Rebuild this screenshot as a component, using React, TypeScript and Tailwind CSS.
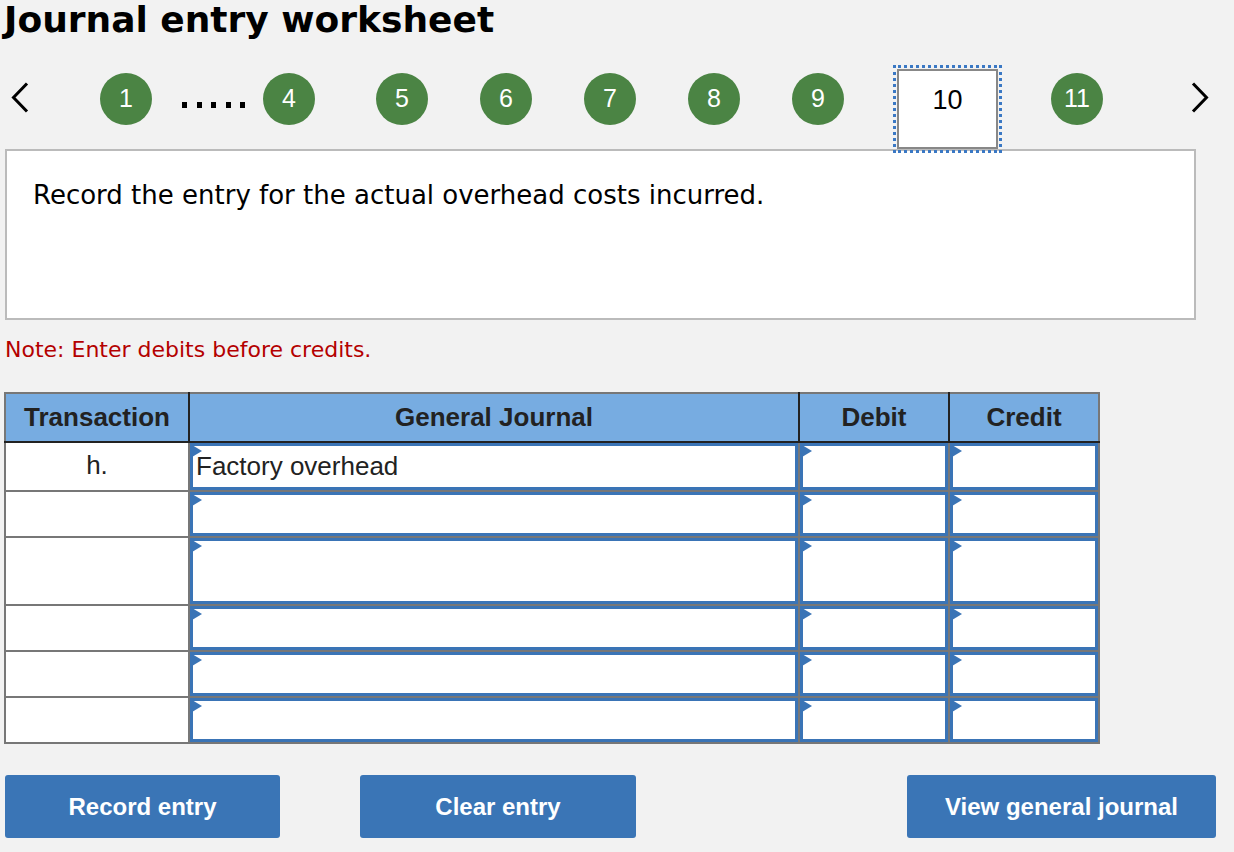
import React from "react";

const STEPS = [
  { n: "4", x: 263 },
  { n: "5", x: 376 },
  { n: "6", x: 480 },
  { n: "7", x: 584 },
  { n: "8", x: 688 },
  { n: "9", x: 792 },
];

const ROWS = [
  { h: "h-[49px]", tx: "h.", acct: "Factory overhead" },
  { h: "h-[46px]", tx: "", acct: "" },
  { h: "h-[68px]", tx: "", acct: "" },
  { h: "h-[46px]", tx: "", acct: "" },
  { h: "h-[46px]", tx: "", acct: "" },
  { h: "h-[46px]", tx: "", acct: "" },
];

function Step({ n }: { n: string }) {
  return (
    <span className="flex h-[52px] w-[52px] shrink-0 items-center justify-center rounded-full bg-[#4b8444] font-['Liberation_Sans',Arial,sans-serif] text-[25px] text-white">
      {n}
    </span>
  );
}

function Cell({ children }: { children?: React.ReactNode }) {
  return (
    <div className="relative h-full border-[3px] border-[#3a74b6] bg-white">
      <span className="absolute -left-[1px] -top-[1px] h-0 w-0 border-y-[6px] border-l-[10px] border-y-transparent border-l-[#3a74b6]" />
      {children && (
        <span className="absolute left-[3px] top-[6px] font-['Liberation_Sans',Arial,sans-serif] text-[26px] leading-[28px] text-[#222]">
          {children}
        </span>
      )}
    </div>
  );
}

function Button({ label, w }: { label: string; w: string }) {
  return (
    <button
      className={`h-[63px] ${w} rounded-[3px] bg-[#3a75b6] font-['Liberation_Sans',Arial,sans-serif] text-[24px] font-bold text-white`}
    >
      {label}
    </button>
  );
}

export default function App() {
  return (
    <div className="h-[852px] w-[1234px] overflow-hidden bg-[#f2f2f2] font-['DejaVu_Sans',Verdana,sans-serif]">
      <h1 className="h-[65px] pl-[4px] text-[36px] font-bold leading-[40px] text-black">
        Journal entry worksheet
      </h1>

      {/* step navigation */}
      <div className="relative h-[84px]">
        <svg className="absolute left-[11px] top-[17px]" width="18" height="31" viewBox="0 0 18 31">
          <path d="M16 1.5 L2.5 15.5 L16 29.5" fill="none" stroke="black" strokeWidth="3" />
        </svg>
        <div className="absolute left-[100px] top-[8px]">
          <Step n="1" />
        </div>
        <div className="absolute left-[182px] top-[37px] flex gap-[9.5px]">
          {[0, 1, 2, 3, 4].map((d) => (
            <span key={d} className="h-[6px] w-[5px] bg-black" />
          ))}
        </div>
        {STEPS.map((s) => (
          <div key={s.n} className="absolute top-[8px]" style={{ left: s.x }}>
            <Step n={s.n} />
          </div>
        ))}
        <div className="absolute left-[893px] top-[0px] z-10 h-[88px] w-[109px] border-[3px] border-dotted border-[#3a78c4] p-[1px]">
          <div className="flex h-full w-full items-center justify-center border-2 border-[#888] bg-white pb-[18px] font-['Liberation_Sans',Arial,sans-serif] text-[27px] text-black">
            10
          </div>
        </div>
        <div className="absolute left-[1051px] top-[8px]">
          <Step n="11" />
        </div>
        <svg className="absolute left-[1191px] top-[17px]" width="18" height="31" viewBox="0 0 18 31">
          <path d="M2 1.5 L15.5 15.5 L2 29.5" fill="none" stroke="black" strokeWidth="3" />
        </svg>
      </div>

      {/* question */}
      <div className="ml-[5px] h-[171px] w-[1191px] border-2 border-[#bbb] bg-white pl-[26px] pt-[25px] text-[26px] text-black">
        Record the entry for the actual overhead costs incurred.
      </div>

      <p className="ml-[5px] mt-[13px] text-[22px] text-[#b40000]">Note: Enter debits before credits.</p>

      {/* journal table */}
      <table className="ml-[4px] mt-[26px] border-collapse border-2 border-[#777] font-['Liberation_Sans',Arial,sans-serif]">
        <thead>
          <tr className="h-[49px] bg-[#77ace1] text-[26px] font-bold text-[#222]">
            <th className="w-[184px] border-2 border-[#222] border-l-[#777] border-t-[#777]">Transaction</th>
            <th className="w-[610px] border-2 border-[#222] border-t-[#777]">General Journal</th>
            <th className="w-[150px] border-2 border-[#222] border-t-[#777]">Debit</th>
            <th className="w-[150px] border-2 border-[#222] border-t-[#777] border-r-[#777]">Credit</th>
          </tr>
        </thead>
        <tbody>
          {ROWS.map((r, i) => (
            <tr key={i} className={r.h}>
              <td className="border-2 border-[#777] bg-white p-0 align-top">
                <div className="pt-[8px] text-center text-[26px] leading-[28px] text-[#222]">{r.tx}</div>
              </td>
              <td className="h-[inherit] border-2 border-[#777] p-0">
                <Cell>{r.acct}</Cell>
              </td>
              <td className="h-[inherit] border-2 border-[#777] p-0">
                <Cell />
              </td>
              <td className="h-[inherit] border-2 border-[#777] p-0">
                <Cell />
              </td>
            </tr>
          ))}
        </tbody>
      </table>

      {/* actions */}
      <div className="mt-[31px] flex pl-[5px]">
        <Button label="Record entry" w="w-[275px]" />
        <div className="ml-[80px]">
          <Button label="Clear entry" w="w-[276px]" />
        </div>
        <div className="ml-[271px]">
          <Button label="View general journal" w="w-[309px]" />
        </div>
      </div>
    </div>
  );
}
